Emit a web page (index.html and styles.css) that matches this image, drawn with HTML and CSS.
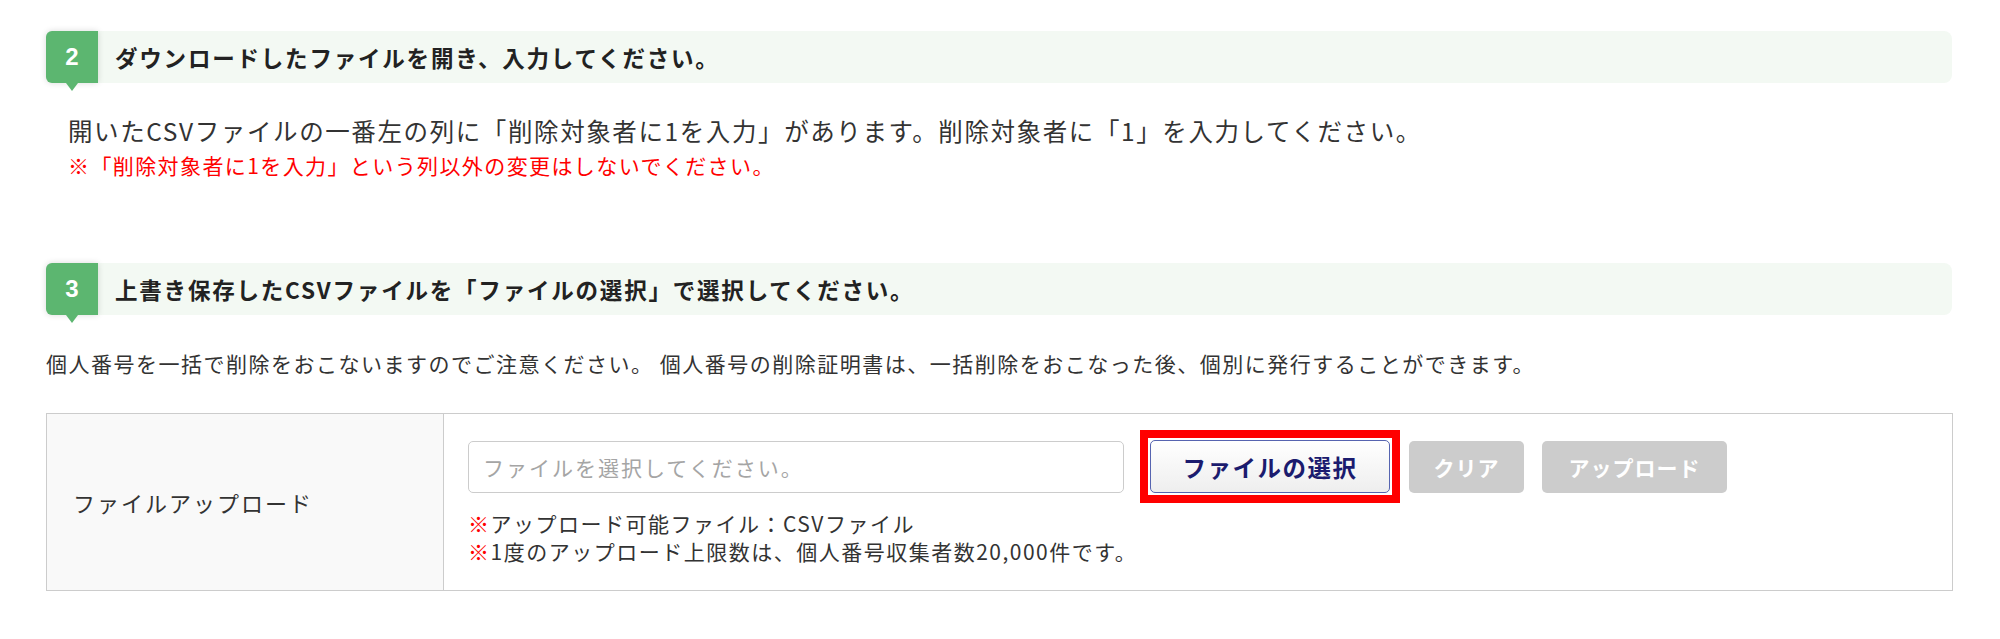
FILE: index.html
```html
<!DOCTYPE html>
<html lang="ja">
<head>
    <meta charset="UTF-8">
    <meta name="viewport" content="width=device-width, initial-scale=1.0">
    <title>一括削除</title>
    <link rel="stylesheet" href="styles.css">
</head>
<body>
    <div class="page">
        <div class="step">
            <div class="step-head">
                <span class="step-num">2</span>
                <h2 class="step-title">ダウンロードしたファイルを開き、入力してください。</h2>
            </div>
            <div class="step-desc">
                <p class="lead">開いたCSVファイルの一番左の列に「削除対象者に1を入力」があります。削除対象者に「1」を入力してください。</p>
                <p class="warn">※「削除対象者に1を入力」という列以外の変更はしないでください。</p>
            </div>
        </div>

        <div class="step step3">
            <div class="step-head">
                <span class="step-num">3</span>
                <h2 class="step-title">上書き保存したCSVファイルを「ファイルの選択」で選択してください。</h2>
            </div>
            <p class="note">個人番号を一括で削除をおこないますのでご注意ください。 個人番号の削除証明書は、一括削除をおこなった後、個別に発行することができます。</p>

            <table class="upload-table">
                <tr>
                    <th>ファイルアップロード</th>
                    <td>
                        <div class="upload-row">
                            <input type="text" class="file-input" placeholder="ファイルを選択してください。">
                            <span class="highlight">
                                <button class="btn-select">ファイルの選択</button>
                            </span>
                            <button class="btn-gray btn-clear">クリア</button>
                            <button class="btn-gray btn-upload">アップロード</button>
                        </div>
                        <ul class="upload-notes">
                            <li><span class="mark">※</span>アップロード可能ファイル：CSVファイル</li>
                            <li><span class="mark">※</span>1度のアップロード上限数は、個人番号収集者数20,000件です。</li>
                        </ul>
                    </td>
                </tr>
            </table>
        </div>
    </div>
</body>
</html>
```

FILE: styles.css
```css
body {
    margin: 0;
    padding: 0;
    background: #fff;
    color: #333;
    font-family: "Noto Sans CJK JP", "Noto Sans", sans-serif;
}

p {
    margin: 0;
}

.page {
    width: 1906px;
    padding: 31px 0 0 46px;
}

.step-head {
    display: flex;
    align-items: center;
    height: 52px;
    background-color: #f3f9f3;
    border-radius: 8px;
}

.step-num {
    position: relative;
    width: 52px;
    height: 52px;
    display: flex;
    align-items: center;
    justify-content: center;
    background-color: #5cb670;
    color: #fff;
    font-family: "Liberation Sans", sans-serif;
    font-size: 24px;
    font-weight: bold;
    border-radius: 6px 0 0 6px;
    box-shadow: 0 0 6px rgba(0, 0, 0, 0.15);
}

.step-num::after {
    content: "";
    position: absolute;
    left: 20px;
    bottom: -8px;
    border-left: 6px solid transparent;
    border-right: 6px solid transparent;
    border-top: 8px solid #5cb670;
}

.step-title {
    margin: 0 0 0 17px;
    font-size: 22.5px;
    font-weight: bold;
    letter-spacing: 1.8px;
    color: #222;
}

.step-desc {
    padding: 30px 0 0 22px;
}

.lead {
    font-size: 24.5px;
    line-height: 35px;
    letter-spacing: 1.6px;
}

.warn {
    color: #f00;
    font-size: 21px;
    line-height: 35px;
    letter-spacing: 1.4px;
}

.step3 {
    margin-top: 80px;
}

.note {
    margin-top: 32px;
    font-size: 21px;
    line-height: 32px;
    letter-spacing: 1.5px;
}

.upload-table {
    margin-top: 34px;
    width: 1907px;
    border-collapse: collapse;
}

.upload-table th,
.upload-table td {
    border: 1px solid #ccc;
}

.upload-table th {
    width: 370px;
    padding: 0 0 0 26px;
    background-color: #f9f9f9;
    font-weight: normal;
    text-align: left;
    font-size: 22px;
    letter-spacing: 2px;
}

.upload-table td {
    padding: 26px 25px 25px 24px;
}

.upload-row {
    display: flex;
    align-items: center;
}

.file-input {
    box-sizing: border-box;
    width: 656px;
    height: 52px;
    padding: 0 14px;
    border: 1px solid #ccc;
    border-radius: 5px;
    font-family: inherit;
    font-size: 21px;
    letter-spacing: 2px;
}

.file-input::placeholder {
    color: #a5a5a5;
}

/* red frame around the select button */
.highlight {
    display: inline-flex;
    margin: -10px 0 -10px 16px;
    padding: 2px;
    border: 8px solid #f00;
    background: #fff;
}

.btn-select {
    box-sizing: border-box;
    width: 240px;
    height: 53px;
    border: 1px solid #5664b0;
    border-radius: 5px;
    background: linear-gradient(#ffffff, #eeeeee);
    color: #1b1b6e;
    font-family: inherit;
    font-size: 23.5px;
    font-weight: bold;
    letter-spacing: 1.5px;
}

.btn-gray {
    box-sizing: border-box;
    height: 52px;
    margin-left: 18px;
    border: none;
    border-radius: 5px;
    background-color: #cccccc;
    color: #fff;
    font-family: inherit;
    font-size: 21px;
    font-weight: bold;
    letter-spacing: 1px;
}

.btn-clear {
    width: 115px;
    margin-left: 9px;
}

.btn-upload {
    width: 185px;
}

.upload-notes {
    list-style: none;
    margin: 16px 0 0 0;
    padding: 0;
    font-size: 21px;
    line-height: 28px;
    letter-spacing: 1.5px;
}

.mark {
    color: #f00;
}
```
